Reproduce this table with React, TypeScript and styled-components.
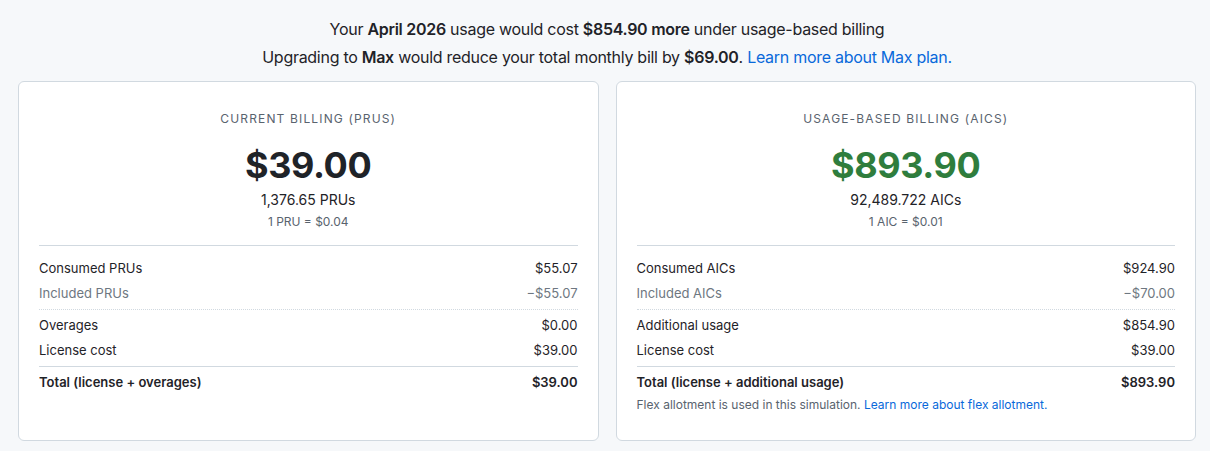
import styled, { createGlobalStyle } from "styled-components";

const GlobalStyle = createGlobalStyle`
  body {
    margin: 0;
    background: #f6f8fa;
    font-family: Inter, "Liberation Sans", sans-serif;
    color: #1f2328;
  }
`;

const Page = styled.div`
  padding: 15px 14px 10px 18px;
`;

const Summary = styled.div`
  text-align: center;
  font-size: 16px;
  letter-spacing: -0.28px;
  line-height: 28px;
  margin-bottom: 10px;
  b {
    font-weight: 600;
  }
`;

const Link = styled.a`
  color: #0969da;
  text-decoration: none;
`;

const Cards = styled.div`
  display: grid;
  grid-template-columns: 1fr 1fr;
  gap: 17px;
`;

const Card = styled.div`
  background: #fff;
  border: 1px solid #d1d9e0;
  border-radius: 6px;
  padding: 28px 20px 20px;
  height: 360px;
  box-sizing: border-box;
`;

const CardHead = styled.div`
  text-align: center;
  padding-bottom: 14px;
  border-bottom: 1px solid #d1d9e0;
`;

const Label = styled.div`
  font-size: 12px;
  letter-spacing: 1.15px;
  color: #59636e;
  line-height: 18px;
`;

const Amount = styled.div<{ $green?: boolean }>`
  font-size: 36px;
  font-weight: 700;
  letter-spacing: -0.4px;
  line-height: 44px;
  margin-top: 15px;
  color: ${(p) => (p.$green ? "#2f7d3d" : "#1f2328")};
`;

const Units = styled.div`
  font-size: 14px;
  line-height: 20px;
  margin-top: 3px;
`;

const Rate = styled.div`
  font-size: 12px;
  line-height: 18px;
  margin-top: 3px;
  color: #59636e;
`;

const Rows = styled.div`
  padding-top: 10px;
`;

const Row = styled.div<{ $muted?: boolean; $bold?: boolean }>`
  display: flex;
  justify-content: space-between;
  font-size: 13px;
  line-height: 25px;
  color: ${(p) => (p.$muted ? "#6e7781" : "#1f2328")};
  font-weight: ${(p) => (p.$bold ? 600 : 400)};
`;

const Divider = styled.div<{ $dotted?: boolean }>`
  border-top: 1px ${(p) => (p.$dotted ? "dotted" : "solid")} #d1d9e0;
  margin: 3px 0 3px;
`;

const Note = styled.div`
  font-size: 12px;
  line-height: 18px;
  color: #59636e;
  margin-top: 1px;
`;

interface IBillingCardProps {
  label: string;
  amount: string;
  green?: boolean;
  units: string;
  rate: string;
  consumedLabel: string;
  consumed: string;
  includedLabel: string;
  included: string;
  extraLabel: string;
  extra: string;
  totalLabel: string;
  total: string;
  note?: boolean;
}

function BillingCard(props: IBillingCardProps) {
  return (
    <Card>
      <CardHead>
        <Label>{props.label}</Label>
        <Amount $green={props.green}>{props.amount}</Amount>
        <Units>{props.units}</Units>
        <Rate>{props.rate}</Rate>
      </CardHead>
      <Rows>
        <Row>
          <span>{props.consumedLabel}</span>
          <span>{props.consumed}</span>
        </Row>
        <Row $muted>
          <span>{props.includedLabel}</span>
          <span>{props.included}</span>
        </Row>
        <Divider $dotted />
        <Row>
          <span>{props.extraLabel}</span>
          <span>{props.extra}</span>
        </Row>
        <Row>
          <span>License cost</span>
          <span>$39.00</span>
        </Row>
        <Divider />
        <Row $bold>
          <span>{props.totalLabel}</span>
          <span>{props.total}</span>
        </Row>
        {props.note && (
          <Note>
            Flex allotment is used in this simulation.{" "}
            <Link href="#">Learn more about flex allotment.</Link>
          </Note>
        )}
      </Rows>
    </Card>
  );
}

export default function App() {
  return (
    <Page>
      <GlobalStyle />
      <Summary>
        <div>
          Your <b>April 2026</b> usage would cost <b>$854.90 more</b> under
          usage-based billing
        </div>
        <div>
          Upgrading to <b>Max</b> would reduce your total monthly bill by{" "}
          <b>$69.00</b>. <Link href="#">Learn more about Max plan.</Link>
        </div>
      </Summary>
      <Cards>
        <BillingCard
          label="CURRENT BILLING (PRUS)"
          amount="$39.00"
          units="1,376.65 PRUs"
          rate="1 PRU = $0.04"
          consumedLabel="Consumed PRUs"
          consumed="$55.07"
          includedLabel="Included PRUs"
          included="−$55.07"
          extraLabel="Overages"
          extra="$0.00"
          totalLabel="Total (license + overages)"
          total="$39.00"
        />
        <BillingCard
          label="USAGE-BASED BILLING (AICS)"
          amount="$893.90"
          green
          units="92,489.722 AICs"
          rate="1 AIC = $0.01"
          consumedLabel="Consumed AICs"
          consumed="$924.90"
          includedLabel="Included AICs"
          included="−$70.00"
          extraLabel="Additional usage"
          extra="$854.90"
          totalLabel="Total (license + additional usage)"
          total="$893.90"
          note
        />
      </Cards>
    </Page>
  );
}
